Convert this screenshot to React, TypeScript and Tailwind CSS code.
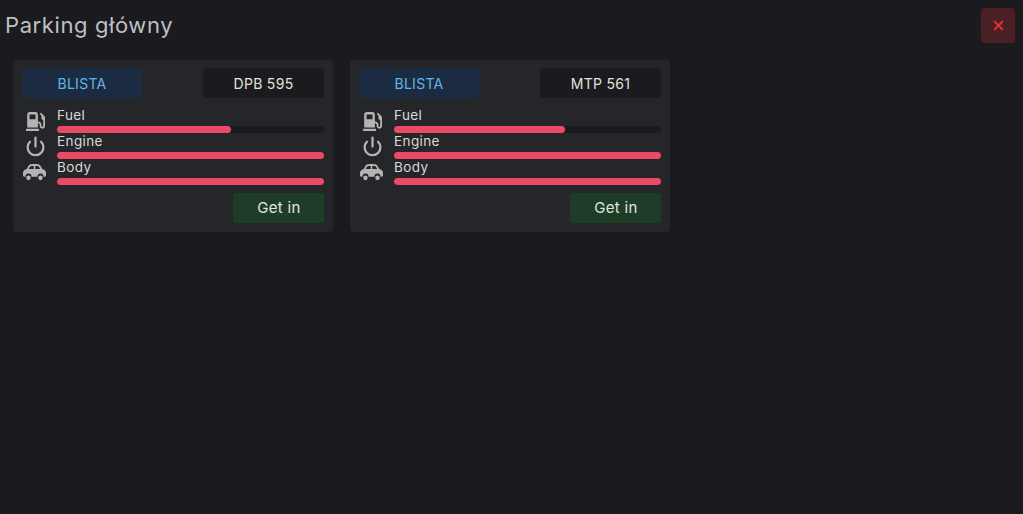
import { Power, X } from 'lucide-react';
import { FaGasPump } from 'react-icons/fa';

function CarIcon() {
  return (
    <svg width="23" height="17" viewBox="0 0 23 16" preserveAspectRatio="none" fill="currentColor">
      <path
        fillRule="evenodd"
        d="M6.6 0.6C7.4 0.2 8.6 0 11.5 0s4.1 0.2 4.9 0.6c1 0.5 1.8 2 2.7 3.9l1.4 0.6c1.5 0.6 2.5 1.8 2.5 3.2v2.4c0 0.8-0.5 1.3-1.3 1.3h-1.2a3 3 0 0 0-6 0H8.5a3 3 0 0 0-6 0H1.3C0.5 12 0 11.5 0 10.7V8.3c0-1.4 1-2.6 2.5-3.2l1.4-0.6c0.9-1.9 1.7-3.4 2.7-3.9zM7.7 2C7 2.3 6.4 3.4 5.8 4.7h4.9V1.8C9.3 1.8 8.2 1.8 7.7 2zM12.3 1.8v2.9h4.9C16.6 3.4 16 2.3 15.3 2c-0.5-0.2-1.6-0.2-3-0.2z"
      />
      <circle cx="5.5" cy="13" r="2.2" />
      <circle cx="17.5" cy="13" r="2.2" />
    </svg>
  );
}

function Bar({ label, value }: { label: string; value: number }) {
  return (
    <div className="h-[26px]">
      <div className="h-[19px] text-[13.5px] leading-[17px] tracking-[0.4px] text-[#d8d8d8]">{label}</div>
      <div className="h-[7px] rounded-full bg-[#1a1b1f]">
        <div className="h-full rounded-full bg-[#ea4a63]" style={{ width: `${value}%` }} />
      </div>
    </div>
  );
}

function VehicleCard({ plate, fuel }: { plate: string; fuel: number }) {
  return (
    <div className="h-[172px] w-[320px] rounded-[4px] bg-[#25262a] px-[9px] pt-[8px]">
      <div className="flex justify-between">
        <div className="flex h-[30px] w-[120px] items-center justify-center rounded-[4px] bg-[#1b2c42] text-[14px] tracking-[0.3px] text-[#62b5ea]">
          BLISTA
        </div>
        <div className="flex h-[30px] w-[121px] items-center justify-center rounded-[4px] bg-[#1a1b1f] text-[14px] tracking-[0.3px] text-[#e6e2d8]">
          {plate}
        </div>
      </div>
      <div className="mt-[9px] flex">
        <div className="mr-[9px] flex w-[26px] flex-col items-center text-[#b4b4b4]">
          <div className="flex h-[26px] items-center justify-center pt-[3px]"><FaGasPump size={19} /></div>
          <div className="flex h-[26px] items-center justify-center pt-[1px]"><Power size={21} strokeWidth={2.6} /></div>
          <div className="flex h-[26px] items-center justify-center pr-[2px]"><CarIcon /></div>
        </div>
        <div className="flex-1">
          <Bar label="Fuel" value={fuel} />
          <Bar label="Engine" value={100} />
          <Bar label="Body" value={100} />
        </div>
      </div>
      <div className="mt-[8px] flex justify-end">
        <button className="h-[30px] w-[91px] rounded-[4px] bg-[#1d3d27] pl-[1px] text-[15px] tracking-[0.3px] text-[#e0e6e0]">Get in</button>
      </div>
    </div>
  );
}

export default function App() {
  return (
    <div className="min-h-[514px] bg-[#1a1a1f] font-['Inter',sans-serif]">
      <div className="flex items-start justify-between pl-[5px] pr-[8px] pt-[8px]">
        <h1 className="pt-[2px] text-[22px] leading-[30px] tracking-[0.6px] text-[#bfc0c2]">Parking główny</h1>
        <button className="flex h-[35px] w-[34px] items-center justify-center rounded-[4px] bg-[#4a2024] text-[#e03131]">
          <X size={15} strokeWidth={3} />
        </button>
      </div>
      <div className="mt-[17px] flex gap-[17px] pl-[13px]">
        <VehicleCard plate="DPB 595" fuel={65} />
        <VehicleCard plate="MTP 561" fuel={64} />
      </div>
    </div>
  );
}
